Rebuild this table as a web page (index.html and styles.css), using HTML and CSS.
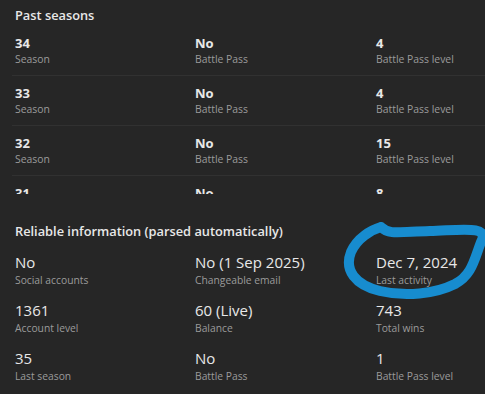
FILE: index.html
```html
<!DOCTYPE html>
<html>
<head>
<meta charset="utf-8">
<link rel="stylesheet" href="styles.css">
</head>
<body>
<div class="page">
  <h2 class="title">Past seasons</h2>
  <div class="scroll">
    <div class="srow">
      <div class="cell"><div class="v">34</div><div class="l">Season</div></div>
      <div class="cell"><div class="v">No</div><div class="l">Battle Pass</div></div>
      <div class="cell"><div class="v">4</div><div class="l">Battle Pass level</div></div>
    </div>
    <div class="srow">
      <div class="cell"><div class="v">33</div><div class="l">Season</div></div>
      <div class="cell"><div class="v">No</div><div class="l">Battle Pass</div></div>
      <div class="cell"><div class="v">4</div><div class="l">Battle Pass level</div></div>
    </div>
    <div class="srow">
      <div class="cell"><div class="v">32</div><div class="l">Season</div></div>
      <div class="cell"><div class="v">No</div><div class="l">Battle Pass</div></div>
      <div class="cell"><div class="v">15</div><div class="l">Battle Pass level</div></div>
    </div>
    <div class="srow">
      <div class="cell"><div class="v">31</div><div class="l">Season</div></div>
      <div class="cell"><div class="v">No</div><div class="l">Battle Pass</div></div>
      <div class="cell"><div class="v">8</div><div class="l">Battle Pass level</div></div>
    </div>
  </div>

  <h2 class="title title2">Reliable information (parsed automatically)</h2>
  <div class="info">
    <div class="icell"><div class="iv">No</div><div class="l">Social accounts</div></div>
    <div class="icell"><div class="iv">No (1 Sep 2025)</div><div class="l">Changeable email</div></div>
    <div class="icell"><div class="iv">Dec 7, 2024</div><div class="l">Last activity</div></div>
    <div class="icell"><div class="iv">1361</div><div class="l">Account level</div></div>
    <div class="icell"><div class="iv">60 (Live)</div><div class="l">Balance</div></div>
    <div class="icell"><div class="iv">743</div><div class="l">Total wins</div></div>
    <div class="icell"><div class="iv">35</div><div class="l">Last season</div></div>
    <div class="icell"><div class="iv">No</div><div class="l">Battle Pass</div></div>
    <div class="icell"><div class="iv">1</div><div class="l">Battle Pass level</div></div>
  </div>
</div>
<svg class="scribble" width="485" height="394" viewBox="0 0 485 394">
  <path d="M381 227 C389 235 398 232 430 231 C462 230 490 225 481 242 C474 260 472 275 455 284 C435 294 405 297 380 291 C355 285 344 270 351 252 C357 238 371 230 381 227" fill="none" stroke="#178ccf" stroke-width="10" stroke-linecap="round" stroke-linejoin="round"/>
</svg>
</body>
</html>
```
FILE: styles.css
```css
html, body {
  margin: 0;
  padding: 0;
  background: #262626;
}
body {
  font-family: "Open Sans", "Liberation Sans", sans-serif;
  color: #e6e6e6;
  width: 485px;
  height: 394px;
  overflow: hidden;
  position: relative;
}
.page {
  padding: 0 0 0 15px;
}
.title {
  margin: 0;
  padding-top: 6px;
  font-size: 12.8px;
  line-height: 18px;
  font-weight: 600;
  height: 20px;
  color: #e8e8e8;
}
.scroll {
  margin-left: -3px;
  height: 168px;
  overflow: hidden;
}
.srow {
  display: grid;
  grid-template-columns: 180px 181px 180px;
  padding: 8px 0 9px 3px;
  border-bottom: 1px solid #313131;
  height: 32px;
}
.v {
  font-size: 13px;
  line-height: 18px;
  font-weight: 700;
  color: #e8e8e8;
}
.l {
  font-size: 10.4px;
  line-height: 14px;
  color: #9b9b9b;
}
.title2 {
  padding-top: 28px;
}
.info {
  display: grid;
  grid-template-columns: 180px 181px 180px;
  row-gap: 12px;
  margin-top: 10px;
}
.info .l {
  font-size: 10.3px;
  line-height: 16px;
}
.iv {
  font-size: 15px;
  line-height: 20px;
  color: #e8e8e8;
}
.scribble {
  position: absolute;
  left: 0;
  top: 0;
  pointer-events: none;
}
```
